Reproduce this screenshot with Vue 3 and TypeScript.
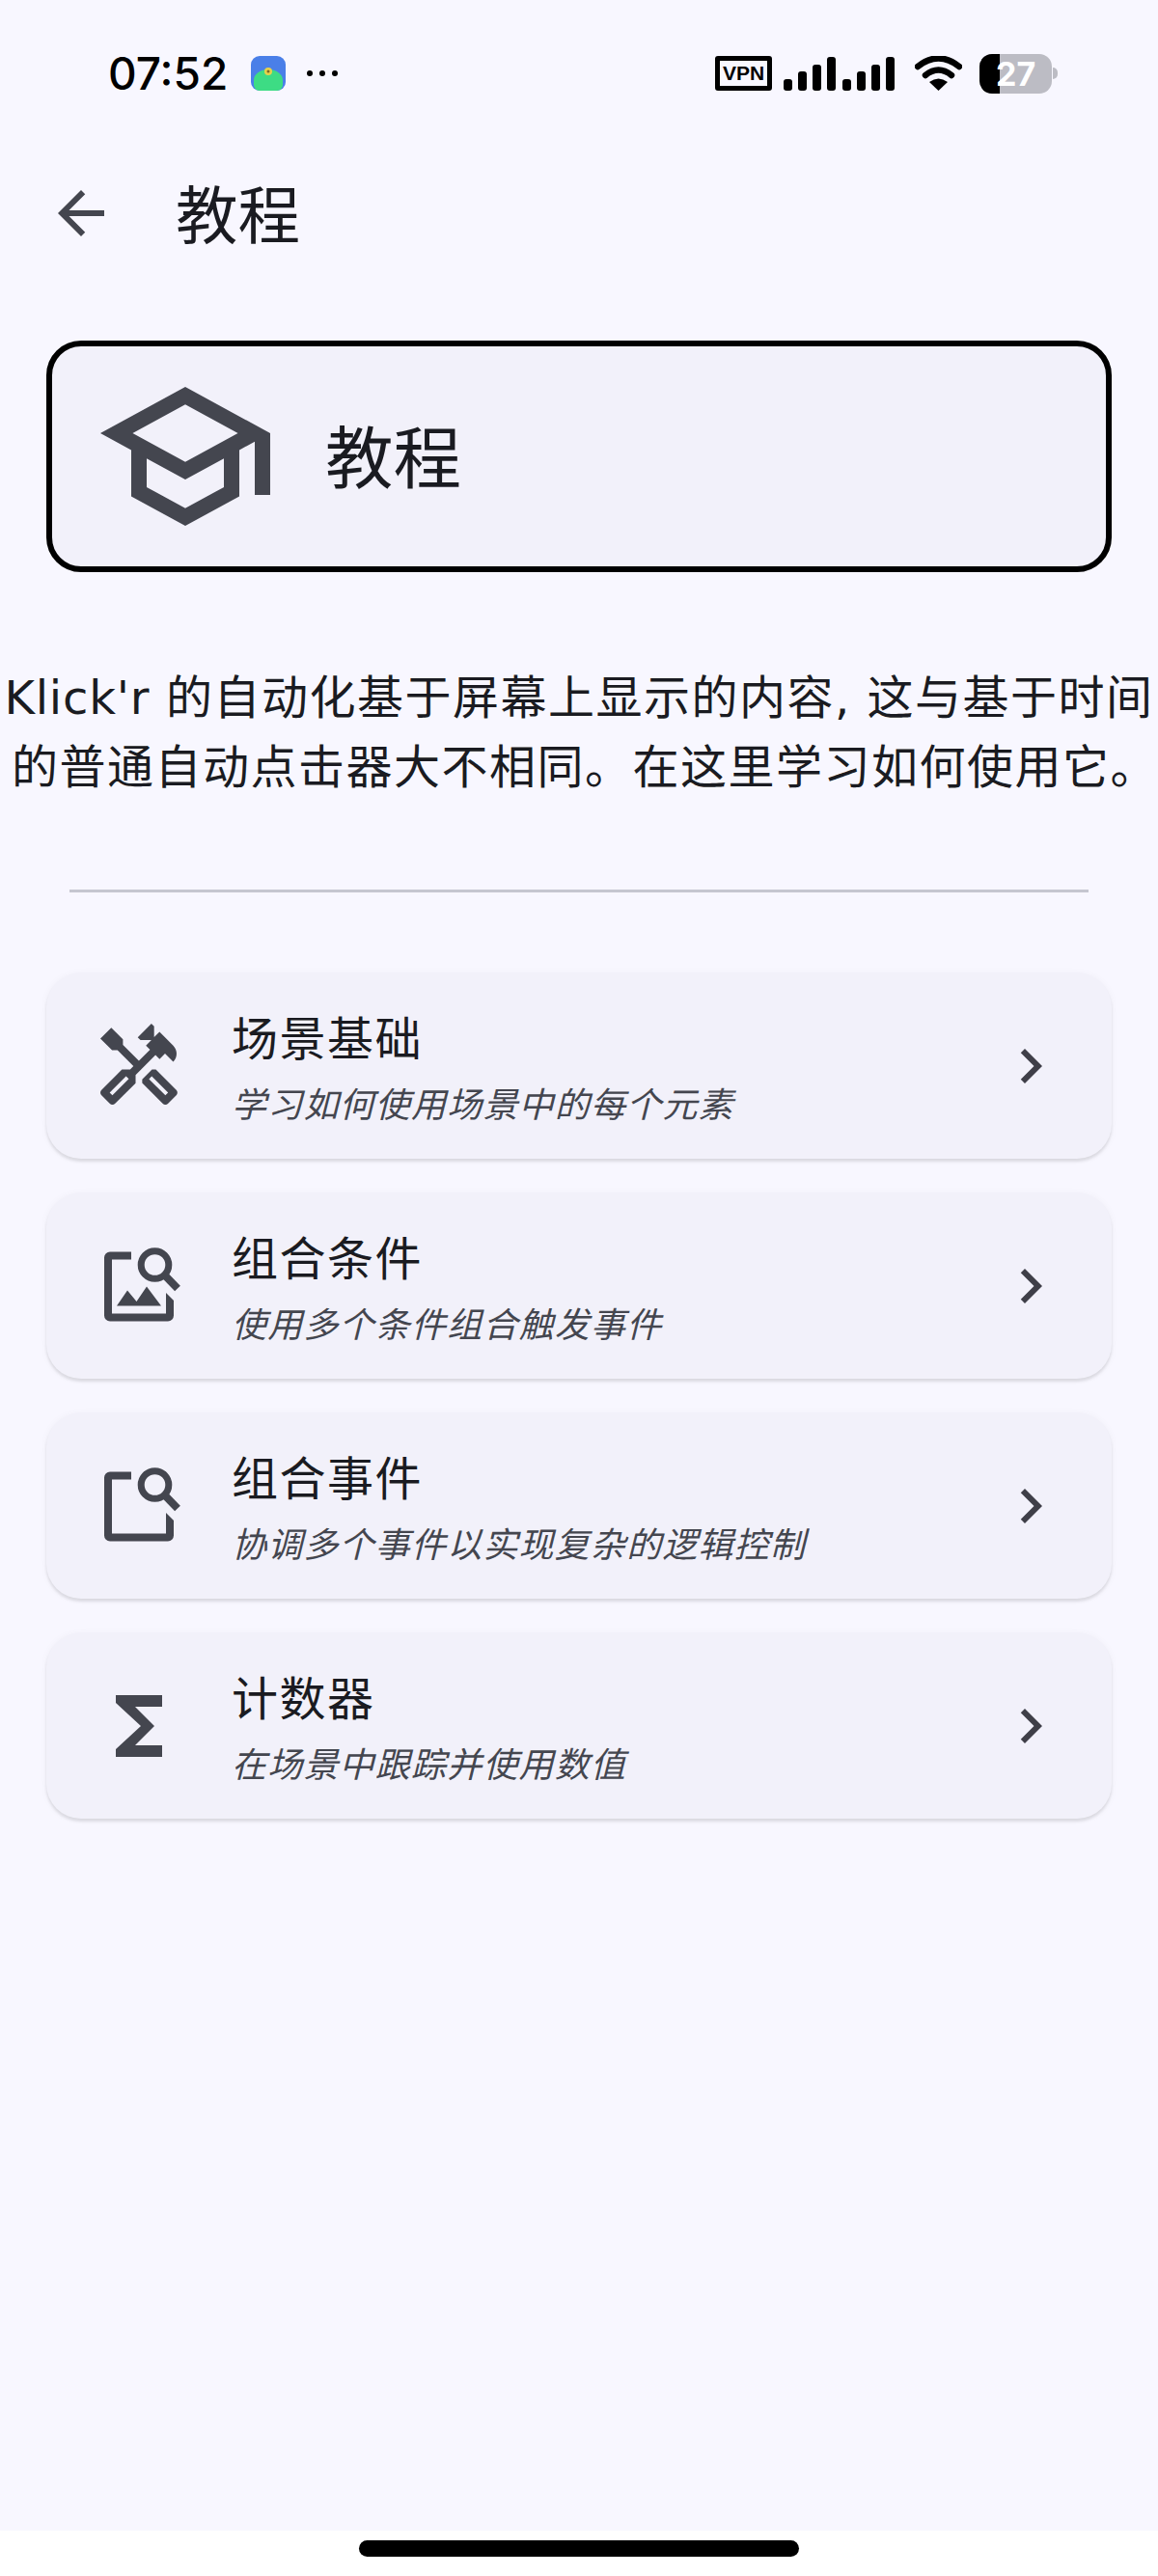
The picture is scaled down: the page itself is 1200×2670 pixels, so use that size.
<script setup lang="ts">
const items = [
  { icon: 'tools', title: '场景基础', desc: '学习如何使用场景中的每个元素' },
  { icon: 'image', title: '组合条件', desc: '使用多个条件组合触发事件' },
  { icon: 'search', title: '组合事件', desc: '协调多个事件以实现复杂的逻辑控制' },
  { icon: 'sum', title: '计数器', desc: '在场景中跟踪并使用数值' },
]
const bars = [12, 20, 27, 35]
</script>

<template>
  <div class="page">
    <div class="status">
      <span class="time">07:52</span>
      <svg class="app" width="36" height="36" viewBox="0 0 36 36">
        <rect width="36" height="36" rx="9" fill="#4a7fe8" />
        <path d="M3 25 a15 11 0 0 1 30 0 v5 a6 6 0 0 1 -6 6 h-18 a6 6 0 0 1 -6 -6z" fill="#3ddc84" />
        <circle cx="18" cy="16" r="4" fill="#e8d24a" />
        <circle cx="18" cy="16" r="1.5" fill="#7a6a2a" />
      </svg>
      <span class="dots"><i></i><i></i><i></i></span>
      <span class="spacer"></span>
      <span class="vpn">VPN</span>
      <span class="signal">
        <i v-for="(h, n) in [...bars, ...bars]" :key="n" :class="{ second: n === 4 }" :style="{ height: h + 'px' }"></i>
      </span>
      <svg class="wifi" width="49" height="36" viewBox="0 0 49 36">
        <path d="M3 11 Q24.5 -6 46 11" fill="none" stroke="#000" stroke-width="6.5" stroke-linecap="round" />
        <path d="M11 20 Q24.5 9 38 20" fill="none" stroke="#000" stroke-width="6.5" stroke-linecap="round" />
        <path d="M15 27 Q24.5 20 34 27 L24.5 36z" fill="#000" />
      </svg>
      <span class="battery">
        <span class="level"></span>
        <span class="num">27</span>
      </span>
      <span class="nub"></span>
    </div>

    <div class="topbar">
      <svg width="72" height="72" viewBox="0 0 24 24"><path fill="#44464f" d="M20 11H7.83l5.59-5.59L12 4l-8 8 8 8 1.41-1.41L7.83 13H20v-2z" /></svg>
      <h1>教程</h1>
    </div>

    <div class="hero">
      <svg width="192" height="192" viewBox="0 0 24 24"><path fill="#44464f" d="M12 3L1 9l4 2.18v6L12 21l7-3.82v-6l2-1.09V17h2V9L12 3zm6.82 6L12 12.72 5.18 9 12 5.28 18.82 9zM17 15.99l-5 2.73-5-2.73v-3.72L12 15l5-2.73v3.72z" /></svg>
      <span>教程</span>
    </div>

    <p class="intro">
      <span class="line"><span class="name">Klick'r</span> 的自动化基于屏幕上显示的内容, 这与基于时间</span>
      <span class="line second-line">的普通自动点击器大不相同。在这里学习如何使用它。</span>
    </p>

    <div class="divider"></div>

    <div class="list">
      <div v-for="item in items" :key="item.title" class="item">
        <svg v-if="item.icon === 'tools'" width="96" height="96" viewBox="0 0 24 24">
          <path fill="#44464f" fill-rule="evenodd" d="M21.67 18.17l-5.3-5.3h-.99l-2.54 2.54v.99l5.3 5.3c.39.39 1.02.39 1.41 0l2.12-2.12c.39-.38.39-1.02 0-1.41zM18.84 19.59l-4.24-4.24.71-.71 4.24 4.24-.71.71z" />
          <path fill="#44464f" fill-rule="evenodd" d="M17.34 10.19l1.41-1.41 2.12 2.12c1.17-1.17 1.17-3.07 0-4.24l-3.54-3.54-1.41 1.41V1.71L15.22 1l-3.54 3.54.71.71h2.83l-1.41 1.41 1.06 1.06-2.89 2.89L7.85 6.48V5.06L4.83 2.04 2 4.87l3.03 3.03h1.41l4.13 4.13-.85.85H7.6l-5.3 5.3c-.39.39-.39 1.02 0 1.41l2.12 2.12c.39.39 1.02.39 1.41 0l5.3-5.3v-2.12l5.15-5.15 1.06 1.06zM9.36 15.34l-4.24 4.24-.71-.71 4.24-4.24.71.71z" />
        </svg>
        <svg v-else-if="item.icon === 'image' || item.icon === 'search'" width="96" height="96" viewBox="0 0 96 96">
          <path fill="#44464f" d="M40 12.5H18a6 6 0 0 0-6 6V78.5a6 6 0 0 0 6 6H78a6 6 0 0 0 6-6V63L76 55V76.5H20V20.5H40z" />
          <circle cx="64.5" cy="26" r="14.3" fill="none" stroke="#44464f" stroke-width="7" />
          <path d="M74 36L88 50.5" stroke="#44464f" stroke-width="8" />
          <path v-if="item.icon === 'image'" fill="#44464f" d="M25 68.5L36 52.5l9.5 11.5L56 48.5l15 20z" />
        </svg>
        <svg v-else width="96" height="96" viewBox="0 0 24 24"><path fill="#44464f" d="M18 4H6v2l6.5 6L6 18v2h12v-3h-7l5-5-5-5h7z" /></svg>
        <div class="text">
          <div class="title">{{ item.title }}</div>
          <div class="desc">{{ item.desc }}</div>
        </div>
        <svg width="72" height="72" viewBox="0 0 24 24"><path fill="#3f3f48" d="M10 6L8.59 7.41 13.17 12l-4.58 4.59L10 18l6-6z" /></svg>
      </div>
    </div>

    <div class="grow"></div>
    <div class="navbar"><span class="pill"></span></div>
  </div>
</template>

<style scoped>
.page {
  width: 1200px;
  min-height: 2670px;
  display: flex;
  flex-direction: column;
  background: #f8f7ff;
  color: #1a1b21;
  font-family: 'Noto Sans', 'Noto Sans CJK SC', sans-serif;
}

.status {
  height: 125px;
  box-sizing: border-box;
  padding: 27px 104px 0 112px;
  display: flex;
  align-items: center;
  color: #000;
}

.time {
  font-family: Inter, Roboto, sans-serif;
  font-size: 46px;
  font-weight: 500;
  width: 148px;
}

.app {
  flex: none;
}

.dots {
  display: flex;
  gap: 7px;
  margin-left: 22px;
}

.dots i {
  width: 6px;
  height: 6px;
  border-radius: 50%;
  background: #000;
}

.spacer {
  flex: 1;
}

.vpn {
  width: 59px;
  height: 36px;
  box-sizing: border-box;
  border: 5px solid #000;
  border-radius: 3px;
  font-family: 'Liberation Sans', sans-serif;
  font-size: 21px;
  font-weight: 700;
  line-height: 26px;
  text-align: center;
}

.signal {
  display: flex;
  align-items: flex-end;
  gap: 6px;
  height: 36px;
  margin-left: 12px;
}

.signal i {
  width: 9px;
  border-radius: 3px;
  background: #000;
}

.signal .second {
  margin-left: 1px;
}

.wifi {
  margin-left: 21px;
}

.battery {
  position: relative;
  width: 75px;
  height: 41px;
  margin-left: 18px;
  border-radius: 13px;
  overflow: hidden;
  background: #bcbcc4;
}

.level {
  display: block;
  width: 21px;
  height: 100%;
  background: #000;
}

.num {
  position: absolute;
  left: 17px;
  top: 0;
  font-family: Inter, Roboto, sans-serif;
  font-size: 34px;
  font-weight: 700;
  line-height: 41px;
  color: #fff;
}

.nub {
  width: 5px;
  height: 12px;
  margin-left: 1px;
  border-radius: 0 6px 6px 0;
  background: #bcbcc4;
}

.topbar {
  height: 192px;
  display: flex;
  align-items: center;
  padding-left: 48px;
}

.topbar h1 {
  margin: -4px 0 0 62px;
  font-size: 64.5px;
  font-weight: 400;
}

.hero {
  margin: 36px 48px 0;
  height: 240px;
  box-sizing: border-box;
  padding-left: 42px;
  display: flex;
  align-items: center;
  gap: 49px;
  border: 6px solid #000;
  border-radius: 36px;
  background: #f2f1fa;
  font-size: 70.5px;
}

.hero span {
  margin-top: -6px;
}

.intro {
  margin: 94px 0 0;
  overflow: hidden;
  font-family: 'DejaVu Sans', 'Noto Sans CJK SC', sans-serif;
  font-size: 48px;
  line-height: 72px;
  letter-spacing: 1.5px;
  text-align: center;
  white-space: nowrap;
}

.name {
  letter-spacing: 0.8px;
}

.line {
  display: block;
}

.second-line {
  padding-left: 12px;
}

.divider {
  height: 3px;
  margin: 91px 72px 0;
  background: #c5c6d0;
}

.list {
  margin: 83px 48px 0;
  display: flex;
  flex-direction: column;
  gap: 35px;
}

.item {
  height: 193px;
  box-sizing: border-box;
  padding: 0 48px;
  display: flex;
  align-items: center;
  border-radius: 36px;
  background: #f2f1fa;
  box-shadow: 0 3px 3px rgba(0, 0, 0, 0.1), 0 1px 9px rgba(0, 0, 0, 0.04);
}

.text {
  flex: 1;
  margin-left: 48px;
}

.title {
  font-size: 48px;
  line-height: 72px;
  letter-spacing: 1.5px;
}

.desc {
  margin-top: 9px;
  font-size: 36px;
  line-height: 48px;
  letter-spacing: 1.2px;
  font-style: italic;
  color: #44464f;
}

.grow {
  flex: 1;
}

.navbar {
  height: 47px;
  box-sizing: border-box;
  padding-top: 10px;
  display: flex;
  justify-content: center;
  background: #fff;
}

.pill {
  width: 456px;
  height: 17px;
  border-radius: 9px;
  background: #000;
}
</style>
